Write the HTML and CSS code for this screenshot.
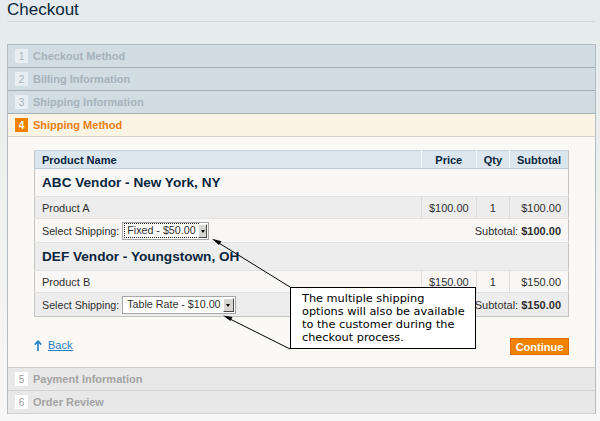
FILE: index.html
```html
<!DOCTYPE html>
<html lang="en">
<head>
    <meta charset="UTF-8">
    <meta name="viewport" content="width=device-width, initial-scale=1.0">
    <title>Checkout</title>
    <link rel="stylesheet" href="styles.css">
</head>
<body>
    <h1 class="page-title">Checkout</h1>

    <ol class="steps">
        <li class="step done"><div class="step-head"><span class="num">1</span>Checkout Method</div></li>
        <li class="step done"><div class="step-head"><span class="num">2</span>Billing Information</div></li>
        <li class="step done"><div class="step-head"><span class="num">3</span>Shipping Information</div></li>
        <li class="step active">
            <div class="step-head"><span class="num">4</span>Shipping Method</div>
            <div class="step-body">
                <table class="ship-table">
                    <thead>
                        <tr>
                            <th class="col-name">Product Name</th>
                            <th class="col-price">Price</th>
                            <th class="col-qty">Qty</th>
                            <th class="col-sub">Subtotal</th>
                        </tr>
                    </thead>
                    <tbody>
                        <tr class="vendor light">
                            <td colspan="4">ABC Vendor - New York, NY</td>
                        </tr>
                        <tr class="product dark">
                            <td>Product A</td>
                            <td class="num-cell">$100.00</td>
                            <td class="qty-cell">1</td>
                            <td class="num-cell">$100.00</td>
                        </tr>
                        <tr class="shipping light">
                            <td>
                                <div class="ship-pick">
                                    <span>Select Shipping:</span>
                                    <span class="select select-fixed focus"><span class="val">Fixed - $50.00</span><span class="drop"></span></span>
                                </div>
                            </td>
                            <td colspan="3" class="num-cell">Subtotal: <b>$100.00</b></td>
                        </tr>
                        <tr class="vendor dark">
                            <td colspan="4">DEF Vendor - Youngstown, OH</td>
                        </tr>
                        <tr class="product light">
                            <td>Product B</td>
                            <td class="num-cell">$150.00</td>
                            <td class="qty-cell">1</td>
                            <td class="num-cell">$150.00</td>
                        </tr>
                        <tr class="shipping dark">
                            <td>
                                <div class="ship-pick">
                                    <span>Select Shipping:</span>
                                    <span class="select select-rate"><span class="val">Table Rate - $10.00</span><span class="drop"></span></span>
                                </div>
                            </td>
                            <td colspan="3" class="num-cell">Subtotal: <b>$150.00</b></td>
                        </tr>
                    </tbody>
                </table>

                <div class="buttons">
                    <a class="back" href="#">
                        <svg width="8" height="11" viewBox="0 0 8 11"><path d="M4 1.5V11" stroke="#1e7ec8" stroke-width="1.6" fill="none"/><path d="M0.8 4.6L4 1.2L7.2 4.6" stroke="#1e7ec8" stroke-width="1.6" fill="none"/></svg>
                        <span>Back</span>
                    </a>
                    <button class="continue" type="button">Continue</button>
                </div>
            </div>
        </li>
        <li class="step todo"><div class="step-head"><span class="num">5</span>Payment Information</div></li>
        <li class="step todo"><div class="step-head"><span class="num">6</span>Order Review</div></li>
    </ol>

    <!-- annotation -->
    <div class="callout">The multiple shipping<br>options will also be available<br>to the customer during the<br>checkout process.</div>
    <svg class="arrows" width="600" height="421" viewBox="0 0 600 421">
        <line x1="290" y1="287" x2="214" y2="240" stroke="#000" stroke-width="1"/>
        <polygon points="212,238.8 221.5,241.2 219,245" fill="#000"/>
        <line x1="290" y1="349" x2="226" y2="317" stroke="#000" stroke-width="1"/>
        <polygon points="223,315.5 232.5,317 230.3,321" fill="#000"/>
    </svg>
</body>
</html>
```

FILE: styles.css
```css
body {
    margin: 0;
    font-family: "Liberation Sans", Arial, sans-serif;
    font-size: 11px;
    color: #2f2f2f;
    background: linear-gradient(#e4eaed 0, #eef0ee 170px, #f7f7f7 421px);
    min-height: 100vh;
    position: relative;
}

.page-title {
    margin: 0 5px 0 7px;
    height: 21px;
    line-height: 20px;
    font-size: 17px;
    font-weight: normal;
    color: #0a263d;
    border-bottom: 1px solid #d3d8da;
}

.steps {
    list-style: none;
    margin: 22px 4px 0 7px;
    padding: 0;
    border: 1px solid #b4bcc2;
    border-bottom: none;
}

.step-head {
    height: 22px;
    display: flex;
    align-items: center;
    padding-left: 7px;
    font-weight: bold;
    border-bottom: 1px solid #a3afb8;
}

.num {
    width: 13px;
    height: 14px;
    margin-right: 5px;
    display: inline-flex;
    align-items: center;
    justify-content: center;
    font-size: 10px;
    font-weight: normal;
}

.step.done .step-head {
    background: #d1dce3;
    color: #a7b3bb;
}

.step.done .num {
    background: #e8eef1;
    color: #a7b3bb;
}

.step.active .step-head {
    background: #fbf3e4;
    color: #eb7f14;
    border-bottom-color: #d6d2c9;
}

.step.active .num {
    background: #f18200;
    color: #fff;
    font-weight: bold;
}

.step.todo .step-head {
    background: #e8e8e8;
    color: #a3a3a3;
    border-bottom: 1px solid #d2d2d2;
}

.step.todo .num {
    background: #fff;
    color: #9a9a9a;
}

.step-body {
    background: #faf9f6;
    padding: 13px 26px 12px 26px;
    border-bottom: 1px solid #cdcdcd;
}

.ship-table {
    width: 535px;
    border-collapse: collapse;
    border: 1px solid #c4c4c4;
    border-top-color: #c4d4e0;
}

.ship-table th {
    height: 17px;
    padding: 0 7px;
    background: #dbe6ee;
    color: #0a263d;
    font-weight: bold;
    text-align: center;
    border-bottom: 1px solid #bccdd9;
    border-left: 1px solid #f1f5f8;
}

.ship-table th.col-name {
    text-align: left;
    border-left: none;
}

.ship-table .col-price {
    width: 38px;
}

.ship-table .col-qty {
    width: 17px;
}

.ship-table .col-sub {
    width: 41px;
}

.ship-table td {
    padding: 0 7px;
    border-top: 1px solid #e2e2e2;
    white-space: nowrap;
}

.ship-table tr.light td {
    background: #f8f7f5;
}

.ship-table tr.dark td {
    background: #eeeded;
}

.vendor td {
    height: 27px;
    font-size: 13.6px;
    font-weight: bold;
    color: #0a263d;
}

.product td {
    height: 21px;
}

.product td + td {
    border-left: 1px solid #dddddd;
}

.shipping td {
    height: 23px;
}

.ship-pick {
    display: flex;
    align-items: center;
    gap: 3px;
    font-size: 10.7px;
}

.num-cell {
    text-align: right;
}

.qty-cell {
    text-align: center;
}

.select {
    display: inline-flex;
    align-items: center;
    justify-content: space-between;
    box-sizing: border-box;
    height: 18px;
    padding: 0 1px 0 2px;
    background: #fff;
    border: 1px solid #a7a7a7;
    color: #2f2f2f;
    white-space: nowrap;
}

.select-fixed {
    width: 87px;
}

.select-rate {
    width: 114px;
}

.select .val {
    padding: 0 2px;
    line-height: 13px;
}

.select.focus .val {
    outline: 1px dotted #222;
    outline-offset: 0;
    padding-right: 2px;
}

.select .drop {
    width: 9px;
    height: 12px;
    position: relative;
    background: #d8d6d2;
    border: 1px solid;
    border-color: #fff #4a4a4a #4a4a4a #fff;
}

.select .drop::after {
    content: "";
    position: absolute;
    left: 2px;
    top: 5px;
    border-left: 2.5px solid transparent;
    border-right: 2.5px solid transparent;
    border-top: 3px solid #000;
}

.buttons {
    width: 535px;
    margin-top: 21px;
    display: flex;
    justify-content: space-between;
    align-items: center;
}

.back {
    display: flex;
    align-items: center;
    gap: 6px;
    margin-top: -3px;
    color: #1e7ec8;
    font-size: 11px;
}

.back span {
    text-decoration: underline;
}

.continue {
    width: 59px;
    height: 17px;
    padding: 0;
    background: #f18200;
    border: 1px solid #de6a00;
    color: #fff;
    font-family: "Liberation Sans", Arial, sans-serif;
    font-size: 11px;
    font-weight: bold;
    cursor: pointer;
}

.callout {
    position: absolute;
    left: 290px;
    top: 287px;
    width: 186px;
    height: 62px;
    box-sizing: border-box;
    padding: 4px 4px 0 11px;
    background: #fff;
    border: 1px solid #000;
    font-family: "DejaVu Sans", sans-serif;
    font-size: 11.3px;
    line-height: 13px;
    color: #000;
    white-space: nowrap;
}

.arrows {
    position: absolute;
    left: 0;
    top: 0;
    pointer-events: none;
}
```
